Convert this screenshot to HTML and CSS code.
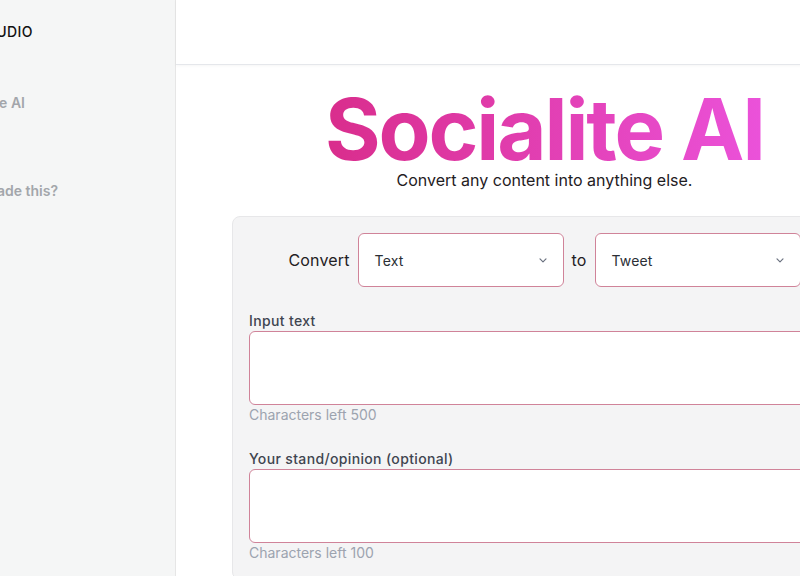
FILE: index.html
```html
<!DOCTYPE html>
<html lang="en">
<head>
    <meta charset="UTF-8">
    <meta name="viewport" content="width=device-width, initial-scale=1.0">
    <title>Socialite AI</title>
    <link rel="stylesheet" href="styles.css">
</head>
<body>

    <div class="sidebar">
        <div class="brand"><span>SOCIALITE STUDIO</span></div>
        <div class="nav-item nav-about"><span>Socialite AI</span></div>
        <div class="nav-item nav-who"><span>Who made this?</span></div>
    </div>

    <div class="main">
        <div class="topbar"></div>

        <div class="hero">
            <h1 class="title">Socialite AI</h1>
            <p class="subtitle">Convert any content into anything else.</p>
        </div>

        <div class="card">
            <div class="convert-row">
                <span class="convert-label">Convert</span>
                <div class="select">
                    <span>Text</span>
                    <svg width="12" height="12" viewBox="0 0 20 20" fill="none" stroke="#6b7280" stroke-width="2" stroke-linecap="round" stroke-linejoin="round"><path d="M5 8l5 5 5-5"/></svg>
                </div>
                <span class="convert-label">to</span>
                <div class="select">
                    <span>Tweet</span>
                    <svg width="12" height="12" viewBox="0 0 20 20" fill="none" stroke="#6b7280" stroke-width="2" stroke-linecap="round" stroke-linejoin="round"><path d="M5 8l5 5 5-5"/></svg>
                </div>
            </div>

            <div class="field">
                <label class="field-label">Input text</label>
                <div class="textarea"></div>
                <div class="field-help">Characters left 500</div>
            </div>

            <div class="field">
                <label class="field-label">Your stand/opinion (optional)</label>
                <div class="textarea"></div>
                <div class="field-help">Characters left 100</div>
            </div>
        </div>
    </div>

</body>
</html>
```

FILE: styles.css
```css
body {
    font-family: Inter, "Noto Sans", sans-serif;
    margin: 0;
    padding: 0;
    display: flex;
    width: 913px;
    height: 576px;
    overflow: hidden;
    background-color: #fff;
    color: #1f2937;
}

.sidebar {
    width: 175px;
    flex: none;
    background-color: #f5f6f6;
    border-right: 1px solid #e6e6e6;
}

.brand,
.nav-item {
    display: flex;
    justify-content: flex-end;
    white-space: nowrap;
    font-size: 14px;
    line-height: 20px;
}

.brand {
    width: 33px;
    height: 64px;
    align-items: center;
    font-weight: 500;
    letter-spacing: 0.03em;
    color: #111;
}

.nav-item {
    font-weight: 600;
    color: #a3a6ab;
}

.nav-about {
    width: 25px;
    margin-top: 29px;
}

.nav-who {
    width: 58px;
    margin-top: 68px;
}

.main {
    width: 737px;
    flex: none;
}

.topbar {
    height: 64px;
    border-bottom: 1px solid #e5e7eb;
    box-shadow: 0 1px 3px rgba(0, 0, 0, 0.04);
}

.hero {
    text-align: center;
}

.title {
    display: inline-block;
    margin: 27px 0 0;
    font-size: 85px;
    line-height: 76px;
    font-weight: 700;
    letter-spacing: -0.025em;
    background: linear-gradient(to right, #d92d8c, #eb52da);
    -webkit-background-clip: text;
    background-clip: text;
    color: transparent;
}

.subtitle {
    margin: 0;
    font-size: 16px;
    line-height: 24px;
    color: #1f2023;
}

.card {
    margin: 24px 56px 0;
    padding: 16px;
    background-color: #f4f4f5;
    border: 1px solid #e7e7e9;
    border-radius: 8px;
}

.convert-row {
    display: flex;
    justify-content: center;
    align-items: center;
    gap: 8px;
}

.convert-label {
    font-size: 16px;
    letter-spacing: 0.01em;
    color: #1f2023;
}

.select {
    width: 206px;
    height: 54px;
    box-sizing: border-box;
    display: flex;
    align-items: center;
    justify-content: space-between;
    padding: 0 14px 0 16px;
    background-color: #fff;
    border: 1px solid #d08399;
    border-radius: 6px;
    font-size: 14px;
    letter-spacing: 0.01em;
    color: #2b2f36;
}

.field {
    margin-top: 24px;
}

.field-label {
    display: block;
    font-size: 14px;
    line-height: 20px;
    font-weight: 500;
    letter-spacing: 0.025em;
    color: #3f4550;
}

.textarea {
    height: 74px;
    box-sizing: border-box;
    background-color: #fff;
    border: 1px solid #d08399;
    border-radius: 6px;
}

.field-help {
    font-size: 14px;
    line-height: 20px;
    color: #9ca3af;
}
```
